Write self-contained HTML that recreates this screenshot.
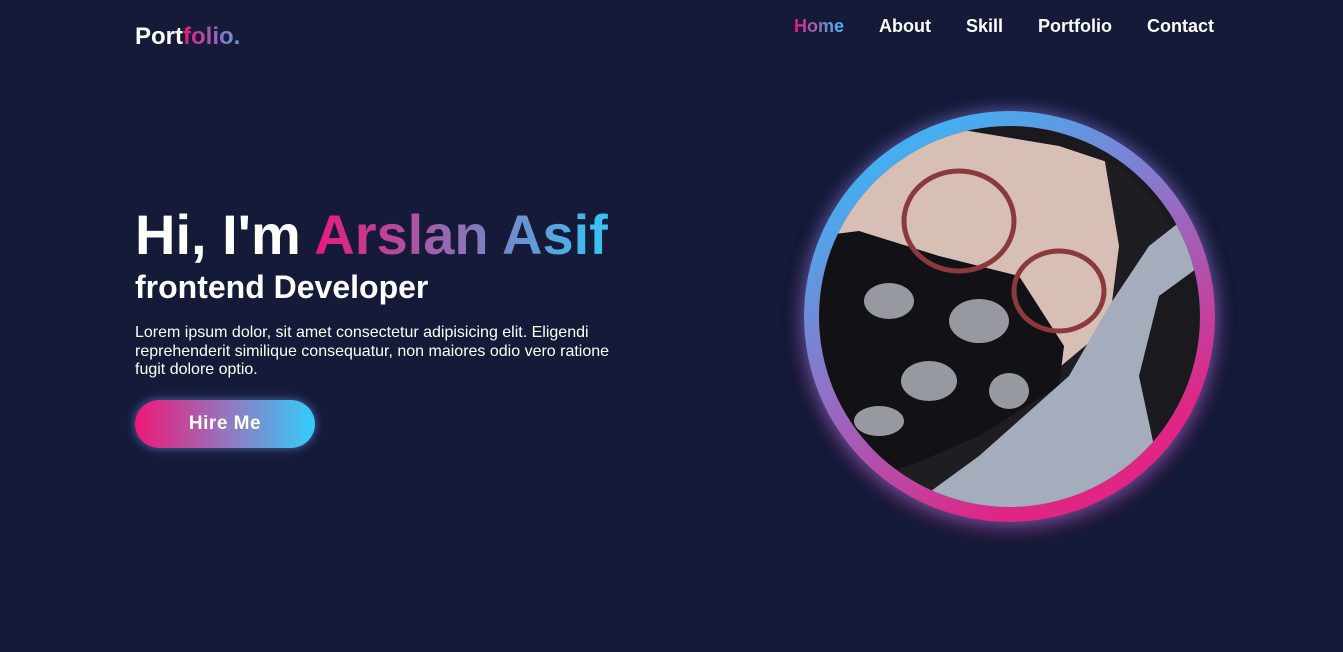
<!DOCTYPE html>
<html><head><meta charset="utf-8"><style>
*{margin:0;padding:0;box-sizing:border-box}
body{width:1343px;height:652px;background:#141a38;font-family:"Liberation Sans",Arial,sans-serif;color:#fff;position:relative;overflow:hidden}
.g{background-image:linear-gradient(90deg,#e8197a,#35c6f4);-webkit-background-clip:text;background-clip:text;color:transparent}
.logo{position:absolute;left:135px;top:23px;font-size:24px;font-weight:bold}
.logo .g{background-image:linear-gradient(90deg,#e8197a,#5a9fe0)}
nav{position:absolute;top:16px;left:794px;font-size:18px;font-weight:bold;white-space:nowrap}
nav span{position:absolute;top:0}
h1{position:absolute;left:135px;top:203px;font-size:56px;font-weight:bold;white-space:nowrap;line-height:64px}
h2{position:absolute;left:135px;top:269px;font-size:32px;font-weight:bold;white-space:nowrap}
p{position:absolute;left:135px;top:324px;width:490px;font-size:16px;line-height:18.5px}
.btn{position:absolute;left:135px;top:400px;width:180px;height:48px;border-radius:24px;background:linear-gradient(90deg,#ee1877,#8c7dc5 55%,#33cdfb);box-shadow:0 0 10px rgba(120,160,255,.6);font-size:19px;font-weight:bold;text-align:center;line-height:48px;letter-spacing:.5px}
.ring{position:absolute;left:804px;top:111px;width:411px;height:411px;border-radius:50%;background:linear-gradient(150deg,#45aef0 15%,#8f72c8 45%,#e02585 80%);box-shadow:0 0 18px rgba(90,150,240,.55),0 6px 22px rgba(230,40,140,.45)}
.ring svg{position:absolute;left:15px;top:15px}
</style></head><body>
<div class="logo">Port<span class="g">folio.</span></div>
<nav><span style="left:0" class="g">Home</span><span style="left:85px">About</span><span style="left:172px">Skill</span><span style="left:244px">Portfolio</span><span style="left:353px">Contact</span></nav>
<h1>Hi, I'm <span class="g">Arslan Asif</span></h1>
<h2>frontend Developer</h2>
<p>Lorem ipsum dolor, sit amet consectetur adipisicing elit. Eligendi reprehenderit similique consequatur, non maiores odio vero ratione fugit dolore optio.</p>
<div class="btn">Hire Me</div>
<div class="ring"><svg width="381" height="381" viewBox="0 0 381 381">
<defs><clipPath id="c"><circle cx="190.5" cy="190.5" r="190.5"/></clipPath></defs>
<g clip-path="url(#c)">
<rect width="381" height="381" fill="#1e1e22"/>
<path d="M0 0H280L300 120 290 200 230 250 0 260Z" fill="#d7bfb6"/>
<path d="M60 0H381V160L340 80 300 40 240 20 150 5Z" fill="#1a1a1e"/>
<path d="M0 110 40 105 120 130 200 150 245 220 240 260 160 310 90 340 0 360Z" fill="#111116"/>
<g fill="#cfd3da" opacity=".7"><ellipse cx="70" cy="175" rx="25" ry="18"/><ellipse cx="160" cy="195" rx="30" ry="22"/><ellipse cx="110" cy="255" rx="28" ry="20"/><ellipse cx="190" cy="265" rx="20" ry="18"/><ellipse cx="60" cy="295" rx="25" ry="15"/></g>
<path d="M381 80 330 120 290 180 250 250 160 330 90 381H381Z" fill="#a5adbc"/>
<path d="M381 140 340 170 320 250 335 320 381 300Z" fill="#1a1a1e"/>
<ellipse cx="140" cy="95" rx="55" ry="50" fill="none" stroke="#8a3a3a" stroke-width="5"/>
<ellipse cx="240" cy="165" rx="45" ry="40" fill="none" stroke="#8a3a3a" stroke-width="5"/>
</g></svg></div>
</body></html>
